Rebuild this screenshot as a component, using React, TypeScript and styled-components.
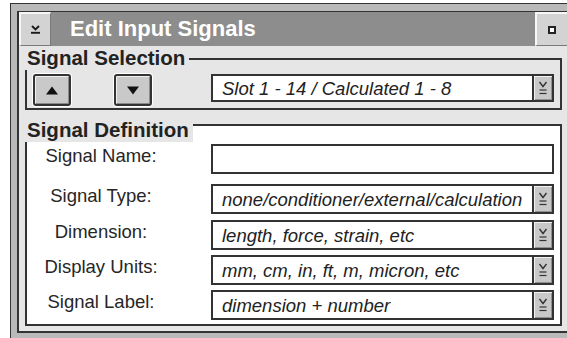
import React from 'react';
import styled, { createGlobalStyle } from 'styled-components';

const GlobalStyle = createGlobalStyle`
  html, body { margin: 0; padding: 0; background: #ffffff; overflow: hidden; }
  body { width: 567px; height: 338px; font-family: "Liberation Sans", Arial, Helvetica, sans-serif; }
  #root { width: 567px; height: 338px; overflow: hidden; }
`;

const Window = styled.div`
  box-sizing: border-box;
  width: 567px;
  margin: 3px 0 0 10px;
  border: 1px solid #333;
  background: #b9b9b9;
  padding: 7px 6px 6px 6px;
`;

const Inner = styled.div`
  border-style: solid;
  border-color: #333;
  border-width: 1px 2px 2px 2px;
  background: #e6e6e6;
`;

const TitleBar = styled.div`
  display: flex;
  align-items: stretch;
  height: 34px;
  background: #8d8d8d;
`;

const TitleButton = styled.div<{ $w: number }>`
  box-sizing: border-box;
  width: ${(p) => p.$w}px;
  height: 34px;
  background: #d3d3d3;
  border-top: 2px solid #f7f7f7;
  border-left: 2px solid #f7f7f7;
  border-right: 1px solid #7a7a7a;
  border-bottom: 1px solid #7a7a7a;
  display: flex;
  align-items: center;
  justify-content: center;
`;

const TitleText = styled.div`
  flex: 1;
  padding-left: 19px;
  color: #ffffff;
  font-weight: bold;
  font-size: 22px;
  line-height: 34px;
  white-space: nowrap;
`;

const MaxIcon = styled.div`
  box-sizing: border-box;
  width: 8px;
  height: 8px;
  border: 2px solid #222;
  background: #fff;
`;

const Content = styled.div`
  padding: 0 6px 5px 6px;
`;

const GroupHeader = styled.div`
  display: flex;
  height: 24px;
`;

const GroupTitle = styled.div`
  font-weight: bold;
  font-size: 20.5px;
  line-height: 24px;
  color: #222;
  padding: 0 4px 0 2px;
  white-space: nowrap;
`;

const GroupRule = styled.div<{ $top: number; $fill: string }>`
  flex: 1;
  margin-top: ${(p) => p.$top}px;
  border-top: 2px solid #333;
  border-right: 2px solid #333;
  background: ${(p) => p.$fill};
`;

const GroupGap = styled.div`
  height: 8px;
`;

const SelectionBody = styled.div`
  display: flex;
  align-items: flex-start;
  border: 2px solid #333;
  border-top: none;
  padding: 4px 6px 2px 6px;
`;

const ArrowButton = styled.button<{ $gap: number }>`
  box-sizing: border-box;
  width: 38px;
  height: 32px;
  margin: 0 0 0 ${(p) => p.$gap}px;
  padding: 0;
  border: 2px solid #333;
  border-radius: 3px;
  background: #c9c9c9;
  box-shadow: 0 0 0 1px #ffffff, inset 1px 1px 0 #efefef, inset -1px -1px 0 #8a8a8a;
  display: flex;
  align-items: center;
  justify-content: center;
`;

const DefinitionBody = styled.div`
  border: 2px solid #333;
  border-top: none;
  background: #ffffff;
  padding: 2px 6px 4px 0;
`;

const Row = styled.div<{ $gap: number }>`
  display: grid;
  grid-template-columns: 148px 1fr;
  column-gap: 36px;
  height: 30px;
  margin-top: ${(p) => p.$gap}px;
`;

const Label = styled.div`
  text-align: center;
  font-size: 18.5px;
  line-height: 24px;
  color: #262626;
  white-space: nowrap;
`;

const Field = styled.div<{ $h: number; $w?: number }>`
  box-sizing: border-box;
  height: ${(p) => p.$h}px;
  ${(p) => (p.$w ? `width: ${p.$w}px; margin-left: auto;` : '')}
  border: 2px solid #333;
  background: #ffffff;
  display: flex;
  align-items: stretch;
`;

const FieldText = styled.div`
  flex: 1;
  display: flex;
  align-items: center;
  padding: 2px 0 0 9px;
  font-style: italic;
  font-size: 18.5px;
  color: #222;
  white-space: nowrap;
  overflow: hidden;
`;

const DropButton = styled.div`
  box-sizing: border-box;
  width: 20px;
  border-left: 2px solid #333;
  background: #c8c8c8;
  box-shadow: inset 1px 1px 0 #f2f2f2, inset -1px -1px 0 #909090;
  display: flex;
  align-items: center;
  justify-content: center;
`;

const MenuIcon = () => (
  <svg width="11" height="9" viewBox="0 0 11 9">
    <polyline points="2,1 5.5,4.5 9,1" fill="none" stroke="#1a1a1a" strokeWidth="1.9" />
    <line x1="1" y1="7.8" x2="10" y2="7.8" stroke="#1a1a1a" strokeWidth="1.9" />
  </svg>
);

const ComboIcon = () => (
  <svg width="10" height="14" viewBox="0 0 10 14">
    <polyline points="1.5,1 5,5.5 8.5,1" fill="none" stroke="#333" strokeWidth="1.4" />
    <line x1="1.5" y1="9" x2="8.5" y2="9" stroke="#333" strokeWidth="1.2" />
    <line x1="1.5" y1="12.5" x2="8.5" y2="12.5" stroke="#333" strokeWidth="1.2" />
  </svg>
);

const Triangle = ({ up }: { up: boolean }) => (
  <svg width="12" height="9" viewBox="0 0 12 9">
    <polygon points={up ? '0,8.5 6,0.5 12,8.5' : '0,0.5 12,0.5 6,8.5'} fill="#111" />
  </svg>
);

const Combo = ({ text, h, w }: { text: string; h: number; w?: number }) => (
  <Field $h={h} $w={w}>
    <FieldText>{text}</FieldText>
    <DropButton>
      <ComboIcon />
    </DropButton>
  </Field>
);

const rows: { label: string; value?: string; gap: number }[] = [
  { label: 'Signal Name:', gap: 0 },
  { label: 'Signal Type:', value: 'none/conditioner/external/calculation', gap: 10 },
  { label: 'Dimension:', value: 'length, force, strain, etc', gap: 6 },
  { label: 'Display Units:', value: 'mm, cm, in, ft, m, micron, etc', gap: 5 },
  { label: 'Signal Label:', value: 'dimension + number', gap: 5 },
];

export default function App() {
  return (
    <>
      <GlobalStyle />
      <Window>
        <Inner>
          <TitleBar>
            <TitleButton $w={32}>
              <MenuIcon />
            </TitleButton>
            <TitleText>Edit Input Signals</TitleText>
            <TitleButton $w={33}>
              <MaxIcon />
            </TitleButton>
          </TitleBar>
          <Content>
            <GroupHeader>
              <GroupTitle>Signal Selection</GroupTitle>
              <GroupRule $top={12} $fill="transparent" />
            </GroupHeader>
            <SelectionBody>
              <ArrowButton $gap={0}>
                <Triangle up />
              </ArrowButton>
              <ArrowButton $gap={43}>
                <Triangle up={false} />
              </ArrowButton>
              <Combo text="Slot 1 - 14 / Calculated 1 - 8" h={28} w={343} />
            </SelectionBody>
            <GroupGap />
            <GroupHeader>
              <GroupTitle>Signal Definition</GroupTitle>
              <GroupRule $top={6} $fill="#ffffff" />
            </GroupHeader>
            <DefinitionBody>
              {rows.map((r) => (
                <Row key={r.label} $gap={r.gap}>
                  <Label>{r.label}</Label>
                  {r.value ? <Combo text={r.value} h={30} /> : <Field $h={30} />}
                </Row>
              ))}
            </DefinitionBody>
          </Content>
        </Inner>
      </Window>
    </>
  );
}
